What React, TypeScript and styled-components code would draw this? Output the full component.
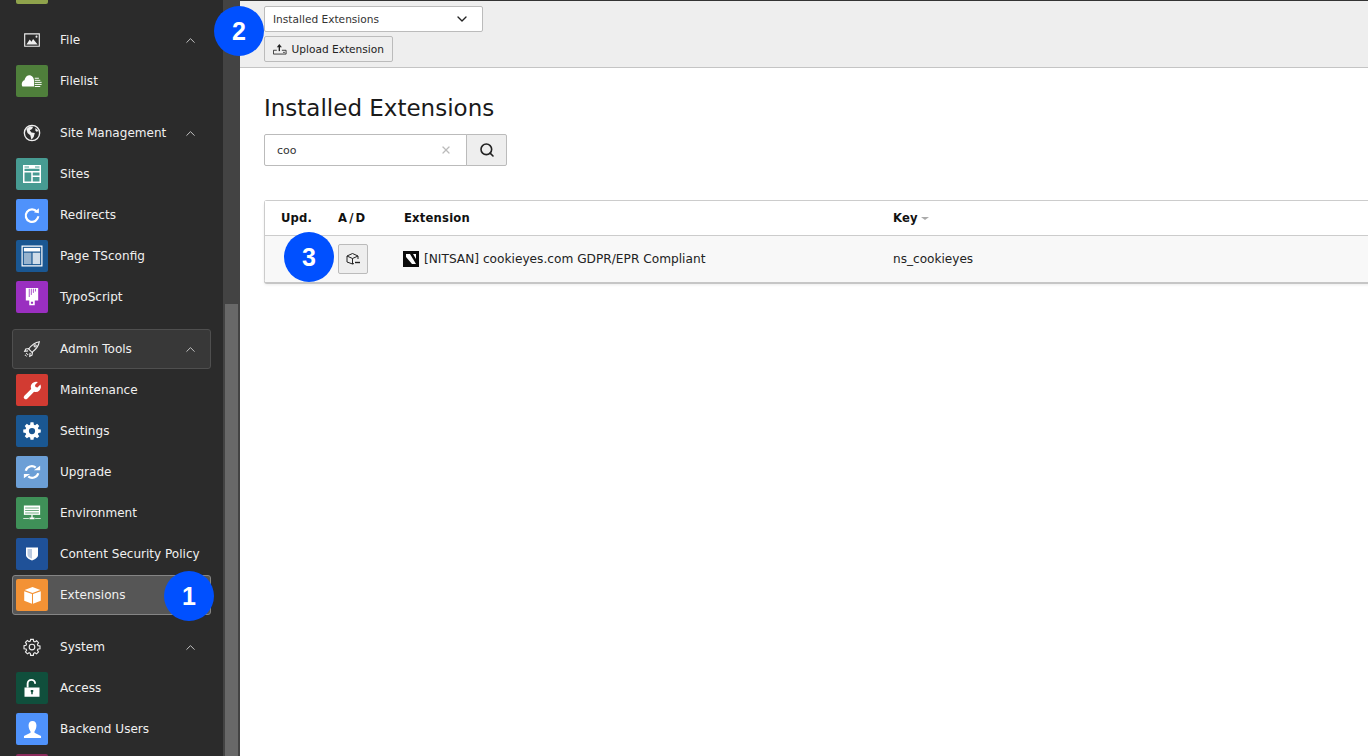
import React from "react";
import styled, { createGlobalStyle } from "styled-components";
import { ChevronDown, ChevronUp, Search, X } from "lucide-react";

const GlobalStyle = createGlobalStyle`
  html, body {
    margin: 0;
    height: 100%;
    overflow: hidden;
    background: #fff;
    font-family: "DejaVu Sans", Verdana, sans-serif;
  }
  #root {
    height: 100%;
  }
`;

const Page = styled.div`
  position: relative;
  display: flex;
  width: 1368px;
  height: 756px;
  overflow: hidden;
`;

const Sidebar = styled.aside`
  display: flex;
  flex: 0 0 240px;
  height: 756px;
  overflow: hidden;
  background: #2b2b2b;
`;

const ModuleList = styled.nav`
  flex: 0 0 223px;
  padding: 0 12px;
  box-sizing: border-box;
  margin-top: -32px;
`;

const ScrollTrack = styled.div`
  flex: 1;
  padding: 304px 2px 0;
  background: #434343;
`;

const ScrollThumb = styled.div`
  height: 100%;
  background: #686868;
`;

const Group = styled.div`
  display: flex;
  flex-direction: column;
  gap: 1px;
  margin-bottom: 12px;
`;

const Row = styled.div<{ $state?: "open" | "active" }>`
  display: flex;
  align-items: center;
  gap: 12px;
  box-sizing: border-box;
  width: 199px;
  height: 40px;
  padding: 0 12px 0 3px;
  border: 1px solid transparent;
  border-radius: 3px;
  color: #f0f0f0;
  font-size: 12.05px;
  ${(p) => p.$state === "open" && "background: #383838; border-color: #4f4f4f;"}
  ${(p) => p.$state === "active" && "background: #565656; border-color: #858585;"}
`;

const IconTile = styled.span<{ $color?: string }>`
  display: flex;
  flex: 0 0 32px;
  align-items: center;
  justify-content: center;
  width: 32px;
  height: 32px;
  border-radius: 2px;
  background: ${(p) => p.$color ?? "transparent"};
`;

const RowLabel = styled.span`
  flex: 1;
  white-space: nowrap;
`;

const Main = styled.main`
  flex: 1;
  min-width: 0;
  overflow: hidden;
`;

const DocHeader = styled.header`
  display: flex;
  flex-direction: column;
  align-items: flex-start;
  gap: 4px;
  box-sizing: border-box;
  height: 68px;
  padding: 6px 24px 0;
  border-top: 1px solid #333;
  border-bottom: 1px solid #c4c4c4;
  background: #eeeeee;
`;

const SelectBox = styled.div`
  display: flex;
  align-items: center;
  justify-content: space-between;
  box-sizing: border-box;
  width: 219px;
  height: 26px;
  margin-top: -1px;
  padding: 0 12px 0 8px;
  border: 1px solid #bbb;
  border-radius: 2px;
  background: #fff;
  color: #333;
  font-size: 10.6px;
`;

const DocButton = styled.button`
  display: flex;
  align-items: center;
  gap: 5px;
  box-sizing: border-box;
  width: 129px;
  height: 26px;
  padding: 0 8px;
  border: 1px solid #bbb;
  border-radius: 2px;
  background: #eee;
  color: #222;
  font-family: inherit;
  font-size: 10.6px;
  white-space: nowrap;
`;

const Content = styled.div`
  padding: 23px 0 0 24px;
`;

const Title = styled.h1`
  margin: 0 0 9px;
  color: #1a1a1a;
  font-size: 23px;
  font-weight: 400;
  line-height: 34px;
  white-space: nowrap;
`;

const SearchForm = styled.div`
  display: flex;
  width: 243px;
  height: 32px;
  margin-bottom: 34px;
`;

const SearchField = styled.div`
  display: flex;
  flex: 1;
  align-items: center;
  justify-content: space-between;
  padding: 0 14px 0 12px;
  border: 1px solid #bbb;
  border-radius: 2px 0 0 2px;
  background: #fff;
  color: #333;
  font-size: 11px;
`;

const SearchButton = styled.button`
  display: flex;
  flex: 0 0 41px;
  align-items: center;
  justify-content: center;
  margin-left: -1px;
  padding: 0;
  border: 1px solid #bbb;
  border-radius: 0 2px 2px 0;
  background: #eee;
  color: #222;
`;

const Panel = styled.div`
  box-sizing: border-box;
  width: 1120px;
  border: 1px solid #ccc;
  border-bottom: 0;
  border-radius: 3px 0 0 3px;
  box-shadow: 0 2px 0 #c6c6c6, 0 3px 3px rgba(0, 0, 0, 0.08);
`;

const ExtensionTable = styled.table`
  width: 100%;
  border-collapse: collapse;
  table-layout: fixed;
  color: #222;
  font-size: 12.1px;
`;

const HeadCell = styled.th<{ $width?: number; $spaced?: boolean }>`
  box-sizing: border-box;
  ${(p) => p.$width && `width: ${p.$width}px;`}
  height: 34px;
  padding: 0;
  border-bottom: 1px solid #ccc;
  background: #fff;
  color: #111;
  font-size: 11.6px;
  font-weight: 700;
  text-align: left;
  letter-spacing: ${(p) => (p.$spaced ? "2.2px" : "0.2px")};
  &:first-child {
    padding-left: 16px;
  }
`;

const BodyCell = styled.td`
  height: 46px;
  padding: 0;
  background: #f8f8f8;
  vertical-align: middle;
  &:first-child {
    padding-left: 16px;
  }
`;

const ActionButton = styled.button`
  display: flex;
  align-items: center;
  justify-content: center;
  box-sizing: border-box;
  width: 30px;
  height: 30px;
  padding: 0;
  border: 1px solid #bbb;
  border-radius: 2px;
  background: #eee;
`;

const ExtensionName = styled.div`
  display: flex;
  align-items: center;
  gap: 5px;
  margin-left: -1px;
  font-size: 12.18px;
  white-space: nowrap;
`;

const SortCaret = styled.span`
  display: inline-block;
  width: 0;
  height: 0;
  margin-left: 3px;
  border-top: 3px solid #aaa;
  border-right: 4px solid transparent;
  border-left: 4px solid transparent;
  vertical-align: middle;
`;

const StepBadge = styled.div<{ $x: number; $y: number }>`
  position: absolute;
  top: ${(p) => p.$y - 25}px;
  left: ${(p) => p.$x - 25}px;
  display: flex;
  align-items: center;
  justify-content: center;
  width: 50px;
  height: 50px;
  border-radius: 50%;
  background: #0050ff;
  color: #fff;
  font-family: "Liberation Sans", Arial, sans-serif;
  font-size: 25px;
  font-weight: 700;
`;

const Svg = ({ size = 20, children }: { size?: number; children: React.ReactNode }) => (
  <svg width={size} height={size} viewBox="0 0 16 16" fill="#fff">
    {children}
  </svg>
);

const icons: Record<string, JSX.Element> = {
  filelist: (
    <Svg size={22}>
      <path d="M1 12c-1-2 0-4 1.500-4.500C3 5 5 3.500 7 4c1.500.4 2.500 2 2.500 4v4z" />
      <path d="M10 6h3M10 7.500h4M10 9h5M10 10.500h5M10 12h4" stroke="#fff" strokeWidth=".7" />
    </Svg>
  ),
  sites: (
    <Svg size={24}>
      <path fillRule="evenodd" d="M2 2h12v12H2zM3 4.500v1.500h10V4.500zM3 7v6h4.500V7zm5.500 0v2H13V7zm0 3v3H13v-3z" />
      <path d="M3 3h3v.6H3zM10 3h3v.6h-3z" fill="#479b92" />
    </Svg>
  ),
  redirects: (
    <Svg size={20}>
      <path d="M12 5.500A5 5 0 1 0 13 9" fill="none" stroke="#fff" strokeWidth="1.800" />
      <path d="M9.500 5.800L13.500 2.500v4z" />
    </Svg>
  ),
  pageTs: (
    <Svg size={24}>
      <path fillRule="evenodd" d="M1 1h14v14H1zM1.800 1.800v12.400h12.400V1.800z" />
      <path d="M2.600 2.600h10.800v2.400H2.600z" />
      <path d="M2.600 5.800h5v7.600h-5z" opacity=".55" />
      <path d="M8.400 5.800h5v7.600h-5z" opacity=".8" />
    </Svg>
  ),
  typoScript: (
    <Svg size={22}>
      <path fillRule="evenodd" d="M3.500 1.500h9v9H10V14H6v-3.500H3.500zM7.200 11.500v1.400h1.600v-1.400z" />
      <path d="M6 2v6M7.500 2v4.500M9 2v3M10.500 2v2" stroke="#9a2fc0" strokeWidth=".6" />
    </Svg>
  ),
  maintenance: (
    <Svg size={21}>
      <path d="M14 3.500l-2.200 2.200-1.500-.4-.4-1.500L12.100 1.600A4 4 0 0 0 7 6.800L1.800 12a1.500 1.500 0 0 0 2.200 2.200L9.200 9A4 4 0 0 0 14 3.500z" />
    </Svg>
  ),
  settings: (
    <Svg size={20}>
      <path fillRule="evenodd" d="M6.800 1h2.400l.3 1.900 1 .4 1.600-1.100 1.700 1.700-1.100 1.600.4 1 1.900.3v2.400l-1.900.3-.4 1 1.100 1.600-1.700 1.700-1.600-1.100-1 .4-.3 1.900H6.800l-.3-1.900-1-.4-1.600 1.100-1.700-1.700 1.100-1.600-.4-1L1 9.200V6.800l1.900-.3.4-1-1.100-1.600 1.700-1.700 1.600 1.100 1-.4zM8 5.500a2.500 2.500 0 1 0 0 5 2.500 2.500 0 0 0 0-5z" />
    </Svg>
  ),
  upgrade: (
    <Svg size={20}>
      <path d="M3 7a5 5 0 0 1 8-2.500M13 9a5 5 0 0 1-8 2.500" fill="none" stroke="#fff" strokeWidth="1.800" />
      <path d="M9.500 6.500h5V3zM6.500 9.500h-5V13z" />
    </Svg>
  ),
  environment: (
    <Svg size={20}>
      <path d="M1.500 2h13v7.500h-13z" />
      <path d="M2.500 4h11M2.500 6h11M2.500 8h11" stroke="#3f9058" strokeWidth=".6" />
      <path d="M7.500 9.500h1v2h-1zM6 11.500h4V13H6zM1 12h4.500v.6H1zM10.500 12H15v.6h-4.500z" />
    </Svg>
  ),
  csp: (
    <Svg size={16}>
      <path d="M2 1.500h12V9c0 2.500-3 4.500-6 5.500-3-1-6-3-6-5.500z" />
      <path d="M3.500 3h4.500v9.800C5.500 12 3.500 10.500 3.500 9z" fill="#1f5198" opacity=".3" />
    </Svg>
  ),
  extensions: (
    <Svg size={21}>
      <path d="M8 1.500l6 2.300L8 6.100 2 3.800z" />
      <path d="M1.700 4.700l5.900 2.200v7.400L1.700 12zM14.300 4.700L8.400 6.900v7.400l5.900-2.300z" />
    </Svg>
  ),
  access: (
    <Svg size={20}>
      <path fillRule="evenodd" d="M2 7.500h12V15H2zM7 9.500v1.400l.4.500V13h1.200v-1.600l.4-.5V9.500z" />
      <path d="M4.500 7.500V4.500a3 3 0 0 1 6 0" fill="none" stroke="#fff" strokeWidth="1.500" />
    </Svg>
  ),
  users: (
    <Svg size={21}>
      <path d="M8 1.500c2 0 3 1.500 3 3.500S10 9 9.500 9.500V10.500L14.500 13v1.500h-13V13l5-2.500v-1C6 9 5 7 5 5s1-3.500 3-3.500z" />
    </Svg>
  ),
  blank: <span />,
};

const OutlineIcon = ({ children }: { children: React.ReactNode }) => (
  <svg width="18" height="18" viewBox="0 0 16 16" fill="none" stroke="#eee" strokeWidth="1">
    {children}
  </svg>
);

const groupIcons: Record<string, JSX.Element> = {
  file: (
    <OutlineIcon>
      <path d="M1.500 2.500h13v11h-13z" />
      <path d="M3 12l3-4.500 1.500 2L9 7l4 5z" fill="#eee" stroke="none" />
      <circle cx="12" cy="5" r=".9" fill="#eee" stroke="none" />
    </OutlineIcon>
  ),
  site: (
    <OutlineIcon>
      <circle cx="8" cy="8" r="6.800" strokeWidth="1.200" />
      <path d="M3 4.500l3-2.500 3 .5-1 2-2 1 1.500 2 3 .5-1 3.500-2 2.500-1-4-2.500-2z" fill="#eee" stroke="none" />
      <path d="M11 3.500l2.500 2-1 1.500-1.500-1z" fill="#eee" stroke="none" />
    </OutlineIcon>
  ),
  admin: (
    <OutlineIcon>
      <path d="M14.500 1.500C11 2 8 4 5 8l3 3c4-3 6-6 6.500-9.500z" />
      <path d="M5.500 7.500l-3 .5-1 2 3-.3M8.500 10.500l-.5 3-2 1 .3-3" />
      <circle cx="10.800" cy="5.200" r="1" />
      <path d="M3.500 11.500l-2 3M4.500 12.500l-1.500 2" strokeDasharray="1 1" />
    </OutlineIcon>
  ),
  system: (
    <OutlineIcon>
      <path d="M6.800 1.200h2.400l.3 1.800 1.100.5 1.500-1 1.700 1.700-1 1.500.5 1.100 1.800.3v2.400l-1.800.3-.5 1.100 1 1.500-1.700 1.700-1.500-1-1.100.5-.3 1.800H6.800l-.3-1.800-1.100-.5-1.500 1-1.700-1.700 1-1.500-.5-1.100-1.800-.3V6.800l1.800-.3.5-1.100-1-1.500 1.700-1.700 1.500 1 1.100-.5z" />
      <circle cx="8" cy="8" r="2.500" />
    </OutlineIcon>
  ),
};

type Module = { label?: string; icon: string; color: string; state?: "active" };
type ModuleGroup = { label?: string; icon?: string; state?: "open"; modules: Module[] };

const groups: ModuleGroup[] = [
  { modules: [{ icon: "blank", color: "#8fa34c" }] },
  { label: "File", icon: "file", modules: [{ label: "Filelist", icon: "filelist", color: "#4f7f3b" }] },
  {
    label: "Site Management",
    icon: "site",
    modules: [
      { label: "Sites", icon: "sites", color: "#479b92" },
      { label: "Redirects", icon: "redirects", color: "#4f92fb" },
      { label: "Page TSconfig", icon: "pageTs", color: "#1a5792" },
      { label: "TypoScript", icon: "typoScript", color: "#9a2fc0" },
    ],
  },
  {
    label: "Admin Tools",
    icon: "admin",
    state: "open",
    modules: [
      { label: "Maintenance", icon: "maintenance", color: "#d23b32" },
      { label: "Settings", icon: "settings", color: "#1a5792" },
      { label: "Upgrade", icon: "upgrade", color: "#6c9fd6" },
      { label: "Environment", icon: "environment", color: "#3f9058" },
      { label: "Content Security Policy", icon: "csp", color: "#1f5198" },
      { label: "Extensions", icon: "extensions", color: "#f39235", state: "active" },
    ],
  },
  {
    label: "System",
    icon: "system",
    modules: [
      { label: "Access", icon: "access", color: "#104f3c" },
      { label: "Backend Users", icon: "users", color: "#4f92fb" },
      { icon: "blank", color: "#8c2b5c" },
    ],
  },
];

const UploadIcon = () => (
  <svg width="16" height="14" viewBox="0 0 16 14" fill="none" stroke="#222" strokeWidth="1">
    <path d="M.5 8.500h4M10.500 8.500h5v4.500H.5V8.500" />
    <path d="M7.500 9.500V3" strokeWidth="1.600" />
    <path d="M4.500 5L7.500 1l3 4z" fill="#222" stroke="none" />
    <path d="M12 11h2" />
  </svg>
);

const DeactivateIcon = () => (
  <svg width="16" height="16" viewBox="0 0 16 16" fill="none" stroke="#222" strokeWidth="1">
    <path d="M9 12.500L7.500 13 2 11V5l5.500-2.500L13 5v3" />
    <path d="M2 5l5.500 2.500L13 5M7.500 7.500V13" />
    <path d="M10 11.500h5" strokeWidth="1.400" />
  </svg>
);

const NitsanLogo = () => (
  <svg width="16" height="16" viewBox="0 0 16 16">
    <rect width="16" height="16" fill="#0c0c0c" />
    <path d="M3 3h4l6 10H9L3 6z" fill="#fff" />
    <path d="M10 3h3v5z" fill="#fff" />
  </svg>
);

function App() {
  return (
    <Page>
      <GlobalStyle />
      <Sidebar>
        <ModuleList>
          {groups.map((group, i) => (
            <Group key={i}>
              {group.label && (
                <Row $state={group.state}>
                  <IconTile>{groupIcons[group.icon ?? "file"]}</IconTile>
                  <RowLabel>{group.label}</RowLabel>
                  <ChevronUp size={15} color="#ccc" strokeWidth={1.5} />
                </Row>
              )}
              {group.modules.map((mod, j) => (
                <Row key={j} $state={mod.state}>
                  <IconTile $color={mod.color}>{icons[mod.icon]}</IconTile>
                  {mod.label && <RowLabel>{mod.label}</RowLabel>}
                </Row>
              ))}
            </Group>
          ))}
        </ModuleList>
        <ScrollTrack>
          <ScrollThumb />
        </ScrollTrack>
      </Sidebar>
      <Main>
        <DocHeader>
          <SelectBox>
            Installed Extensions
            <ChevronDown size={16} color="#222" />
          </SelectBox>
          <DocButton>
            <UploadIcon />
            Upload Extension
          </DocButton>
        </DocHeader>
        <Content>
          <Title>Installed Extensions</Title>
          <SearchForm>
            <SearchField>
              coo
              <X size={12} color="#bbb" strokeWidth={2.5} />
            </SearchField>
            <SearchButton>
              <Search size={16} strokeWidth={2.4} />
            </SearchButton>
          </SearchForm>
          <Panel>
            <ExtensionTable>
              <thead>
                <tr>
                  <HeadCell $width={73}>Upd.</HeadCell>
                  <HeadCell $width={66} $spaced>A/D</HeadCell>
                  <HeadCell $width={489}>Extension</HeadCell>
                  <HeadCell>
                    Key
                    <SortCaret />
                  </HeadCell>
                </tr>
              </thead>
              <tbody>
                <tr>
                  <BodyCell />
                  <BodyCell>
                    <ActionButton>
                      <DeactivateIcon />
                    </ActionButton>
                  </BodyCell>
                  <BodyCell>
                    <ExtensionName>
                      <NitsanLogo />
                      [NITSAN] cookieyes.com GDPR/EPR Compliant
                    </ExtensionName>
                  </BodyCell>
                  <BodyCell>ns_cookieyes</BodyCell>
                </tr>
              </tbody>
            </ExtensionTable>
          </Panel>
        </Content>
      </Main>
      <StepBadge $x={189} $y={596}>1</StepBadge>
      <StepBadge $x={239} $y={31}>2</StepBadge>
      <StepBadge $x={309} $y={257}>3</StepBadge>
    </Page>
  );
}

export default App;
